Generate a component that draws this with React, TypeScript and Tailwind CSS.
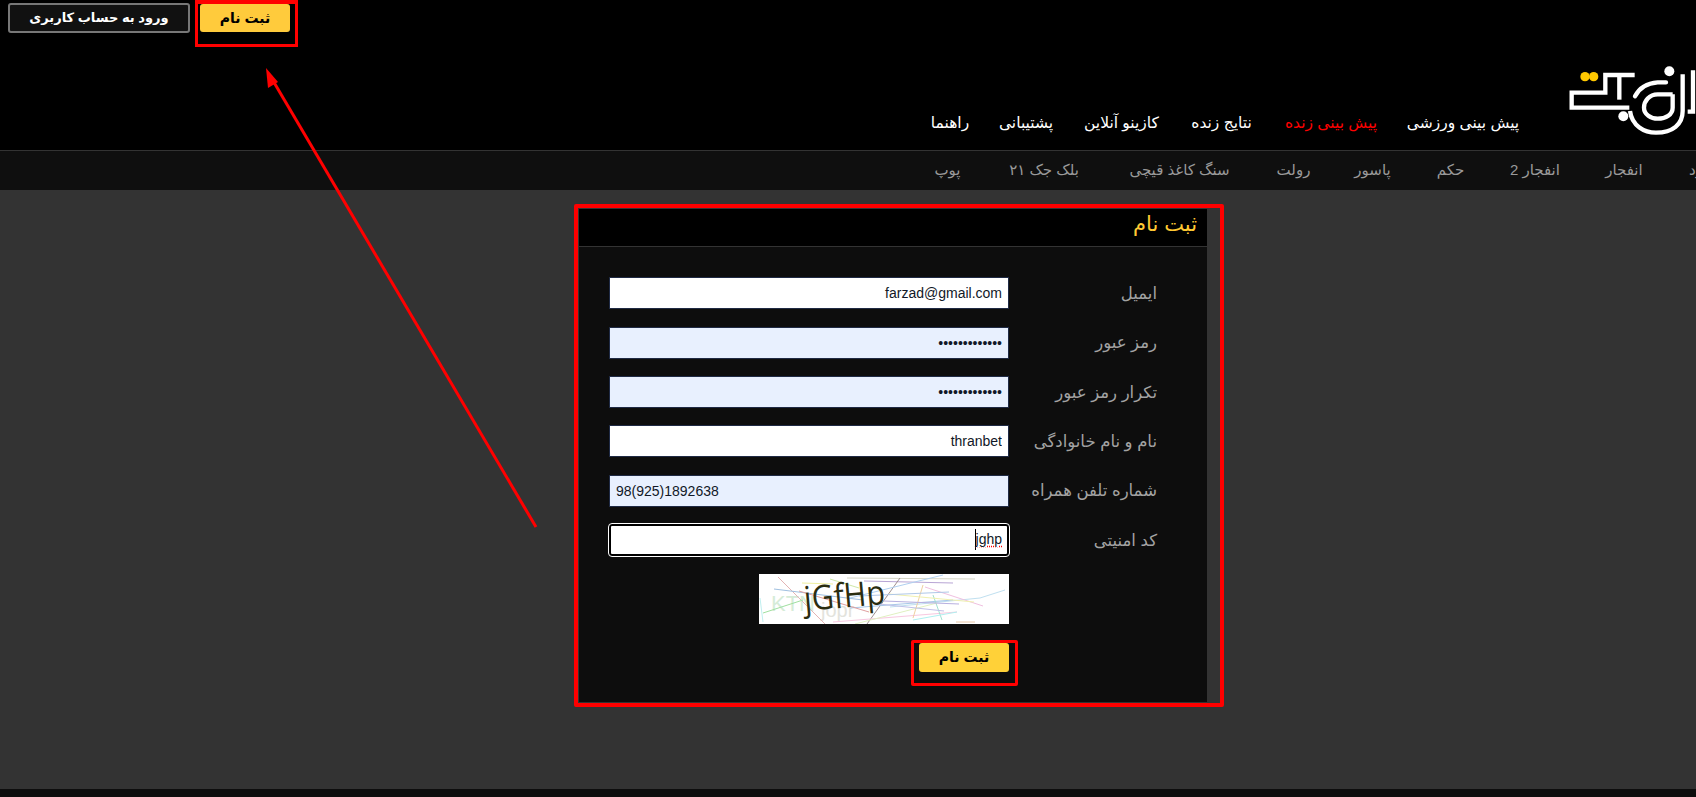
import React from "react";

const fa = "font-['Liberation_Sans','DejaVu_Sans',sans-serif]";
const nav = [
  { t: "پیش بینی ورزشی", w: "w-[110px]", c: "text-white" },
  { t: "پیش بینی زنده", w: "w-[94px]", c: "text-[#ff0000]" },
  { t: "نتایج زنده", w: "w-[65px]", c: "text-white" },
  { t: "کازینو آنلاین", w: "w-[75px]", c: "text-white" },
  { t: "پشتیبانی", w: "w-[56px]", c: "text-white" },
  { t: "راهنما", w: "w-[36px]", c: "text-white" },
];
const sub = [
  { t: "پوپ", w: "w-[27px] justify-center" },
  { t: "بلک جک ۲۱", w: "w-[74px] justify-center" },
  { t: "سنگ کاغذ قیچی", w: "w-[105px] justify-center" },
  { t: "رولت", w: "w-[31px] justify-center" },
  { t: "پاسور", w: "w-[35px] justify-center" },
  { t: "حکم", w: "w-[29px] justify-center" },
  { t: "انفجار 2", w: "w-[48px] justify-center" },
  { t: "انفجار", w: "w-[38px] justify-center" },
  { t: "تخته نرد", w: "w-[64px] justify-end" },
];

function Logo() {
  return (
    <svg viewBox="0 0 390 240" className="w-[130px] h-[80px] shrink-0" fill="none" stroke="#fff" strokeWidth="13">
      <circle cx="57" cy="47" r="14" fill="#ffc800" stroke="none" />
      <circle cx="83" cy="47" r="14" fill="#ffc800" stroke="none" />
      <circle cx="310" cy="31" r="15" fill="#fff" stroke="none" />
      <circle cx="172" cy="166" r="15" fill="#fff" stroke="none" />
      <path d="M206 42H118V95H17V140H190" strokeLinejoin="miter" />
      <path d="M160 42V116" />
      <path d="M207 106C220 80 245 66 275 64H300" strokeLinecap="round" />
      <path d="M192 150C198 195 235 215 270 215C320 215 350 190 350 150V40" />
      <path d="M320 100H275C250 100 234 120 234 140C234 160 255 173 275 173C300 173 320 160 320 140V100" />
      <path d="M381 28V152H365" />
    </svg>
  );
}

function Captcha() {
  const lines: [string, string][] = [
    ["19,3 66,50", "#e3b4b4"],
    ["71,5 100,14", "#cfe8a8"],
    ["88,4 216,5", "#d5d5c5"],
    ["105,7 194,9", "#b8a5d5"],
    ["141,4 108,50", "#a09090"],
    ["15,15 104,26", "#a0c0e0"],
    ["43,9 74,10", "#f0f0a0"],
    ["4,39 44,26", "#a0e0a0"],
    ["184,1 91,24", "#b0d0f0"],
    ["246,16 221,24 131,33", "#c0e0f0"],
    ["166,13 224,32", "#f0c0e0"],
    ["91,34 194,26", "#a8c8e8"],
    ["74,48 198,38", "#f8c8e0"],
    ["174,21 183,46", "#a0e0d0"],
    ["154,46 198,38", "#b0f0f0"],
    ["96,50 178,29", "#e0f0c0"],
    ["1,24 4,48", "#c0f0f0"],
    ["197,48 216,48", "#e8c8a8"],
    ["164,11 154,44", "#f0d0a0"],
    ["40,17 110,38", "#e0a0a0"],
    ["120,30 185,37", "#c0c0e8"],
    ["130,20 215,28", "#f0f0b0"],
    ["100,22 190,18", "#b0c8e8"],
    ["125,27 200,30", "#b8b0e0"],
  ];
  return (
    <div dir="ltr" className="w-[250px]">
      <svg viewBox="0 0 250 50" className="w-[250px] h-[50px] bg-white block">
        <text x="12" y="37" fontSize="22" fill="#d6ecd8" fontFamily="Liberation Sans">KTN</text>
        <text x="62" y="43" fontSize="20" fill="#e3e3dc" fontFamily="Liberation Sans">jopr</text>
        {lines.map(([p, c]) => (
          <polyline key={p} points={p} fill="none" stroke={c} strokeWidth="1" />
        ))}
        <text x="46" y="37" fontSize="34" fill="#2a2d10" fontFamily="Open Sans" textLength="81" lengthAdjust="spacingAndGlyphs" transform="rotate(-5 46 37)">jGfHp</text>
      </svg>
    </div>
  );
}

function Field({ label, value, type = "text", fill = "bg-white", ltr = false }: { label: string; value: string; type?: string; fill?: string; ltr?: boolean }) {
  return (
    <div className="flex items-center">
      <label className="w-[148px] text-[16.5px] leading-none text-[#a3a3a3]">{label}</label>
      <input
        readOnly
        type={type}
        value={value}
        dir={ltr ? "ltr" : "rtl"}
        className={`w-[400px] h-[32px] border border-[#1f2a44] px-[6px] text-[14px] text-[#111827] font-['Liberation_Sans',sans-serif] outline-none ${fill}`}
      />
    </div>
  );
}

export default function App() {
  return (
    <div dir="ltr" className={`relative h-[797px] overflow-hidden flex flex-col bg-[#333333] ${fa}`}>
      <header className="h-[151px] shrink-0 bg-black border-b border-[#333333] flex items-end">
        <div className="self-start flex items-start gap-[10px] pl-2 pt-[3px]">
          <button dir="rtl" className="w-[182px] h-[30px] rounded-[3px] border-2 border-[#777777] bg-[#111111] text-white text-[13px] font-bold">ورود به حساب کاربری</button>
          <div className="relative w-[90px] h-[28px] mt-px">
            <button dir="rtl" className="w-full h-full rounded-[3px] bg-[#ffcb3c] text-black text-[14px] font-bold">ثبت نام</button>
            <div className="absolute left-[-5px] top-[-4px] w-[103px] h-[47px] border-[3px] border-[#ff0000] border-t-[4px]" />
          </div>
        </div>
        <nav dir="rtl" className="ml-auto mr-[48px] mb-[18px] flex gap-[30px] text-[15.5px] leading-[18px] whitespace-nowrap">
          {nav.map((n) => (
            <span key={n.t} className={`${n.w} ${n.c} flex justify-center`}>{n.t}</span>
          ))}
        </nav>
        <div className="pb-[10px] -mb-px"><Logo /></div>
      </header>

      <div className="h-[39px] shrink-0 bg-[#0f0f0f] flex items-center gap-[46px] pl-[934px] overflow-hidden whitespace-nowrap text-[15px] text-[#9a9a9a]">
        {sub.map((s) => (
          <span dir="rtl" key={s.t} className={`${s.w} shrink-0 flex`}>{s.t}</span>
        ))}
      </div>

      <main className="flex-1 pl-[574px] pt-[14px]">
        <div className="w-[650px] h-[503px] border-4 border-[#ff0000] pr-[12px] rounded-[2px]">
          <section dir="rtl" className="h-full border border-[#333333] bg-[#0d0d0d]">
            <h2 className="h-[38px] bg-black border-b border-[#333333] pr-[10px] text-[21px] leading-[30px] font-normal text-[#ffc933]">ثبت نام</h2>
            <div className="pt-[30.4px] pr-[50px] flex flex-col gap-[17.3px]">
              <Field label="ایمیل" value="farzad@gmail.com" />
              <Field label="رمز عبور" value="•••••••••••••" type="password" fill="bg-[#e8f0fe]" />
              <Field label="تکرار رمز عبور" value="•••••••••••••" type="password" fill="bg-[#e8f0fe]" />
              <Field label="نام و نام خانوادگی" value="thranbet" />
              <Field label="شماره تلفن همراه" value="98(925)1892638" fill="bg-[#e8f0fe]" ltr />
              <div className="flex items-center">
                <label className="w-[148px] text-[16.5px] leading-none text-[#a3a3a3]">کد امنیتی</label>
                <div className="w-[400px] h-[32px] rounded-[3px] bg-white border-2 border-black outline outline-1 outline-white flex items-center px-[5px] text-[14px] text-[#111827] font-['Liberation_Sans',sans-serif]">
                  <span dir="ltr" className="border-l border-black underline decoration-dotted decoration-[#ff0000]">jghp</span>
                </div>
              </div>
              <div className="pr-[148px] mt-px"><Captcha /></div>
              <div className="pr-[148px]">
                <div className="relative w-[90px] h-[29px] mt-[2px]">
                  <button className="w-full h-full rounded-[3px] bg-[#ffd138] text-black text-[14px] font-bold">ثبت نام</button>
                  <div className="absolute right-[-9px] top-[-3px] w-[107px] h-[46px] rounded-[2px] border-[3px] border-[#ff0000]" />
                </div>
              </div>
            </div>
          </section>
        </div>
      </main>

      <footer className="h-[8px] shrink-0 bg-[#0d0d0d]" />

      <svg className="absolute left-0 top-0 pointer-events-none" width="1696" height="797">
        <line x1="536" y1="527" x2="272" y2="79" stroke="#ff0000" strokeWidth="3" />
        <polygon points="266,68 278,82 268,88" fill="#ff0000" />
      </svg>
    </div>
  );
}
